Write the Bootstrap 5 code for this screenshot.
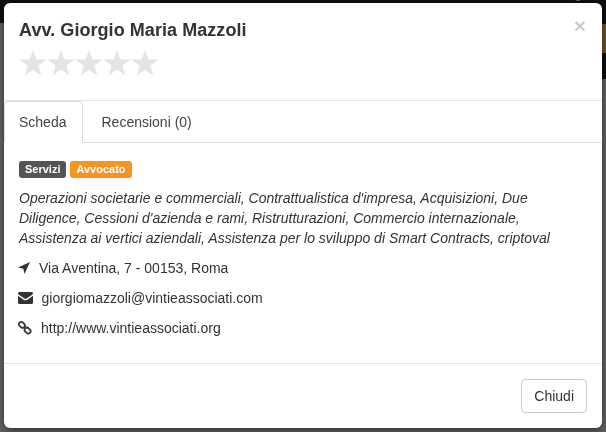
<!DOCTYPE html>
<html lang="it">
<head>
<meta charset="utf-8">
<title>Avv. Giorgio Maria Mazzoli</title>
<link href="https://cdn.jsdelivr.net/npm/bootstrap@5.3.0/dist/css/bootstrap.min.css" rel="stylesheet">
<style>
html,body{height:100%;margin:0;overflow:hidden;background:#636363;font-family:"Liberation Sans",Arial,sans-serif;font-size:14px;line-height:20px;color:#333}
.topstrip{height:23px;background:#0f0f0f;color:#666;overflow:hidden;font-size:14px;gap:31px;line-height:20px;padding-left:467px;white-space:nowrap}
.topstrip span{margin-top:-17px;flex:none}
.sidecol{width:44px}
.bandtop{height:1px;background:#0f0f0f}
.bandgold{height:29px;background:#6b5427}
.banddark{height:26px;background:#0f0f0f}
.pagewrap{position:fixed;inset:0;padding:3px 4px 4px}
.sheet.modal-content{height:425px;border:0;border-radius:6px;background:#fff;box-shadow:0 3px 9px rgba(0,0,0,.5);color:#333;font-size:14px}
.sheet .modal-header{display:block;border:0;padding:15px 15px 0;height:97px;position:relative;border-radius:6px 6px 0 0}
.sheet h4{font-size:18px;line-height:24px;font-weight:700;margin:0;color:#333;letter-spacing:.06px}
.stars{margin-top:7px;height:28px}
.stars svg{width:28px;height:28px;display:block}
.xclose{position:absolute;right:16px;top:12px;border:0;background:none;padding:0;font-size:21px;line-height:21px;font-weight:700;color:#000;opacity:.2;font-family:"Liberation Sans",sans-serif}
.sheet .nav-tabs{border-top:1px solid #e5e5e5;border-bottom:1px solid #ddd;padding:0;height:43px;--bs-nav-tabs-border-width:0}
.sheet .nav-tabs .nav-link{font-size:14px;line-height:20px;padding:10px 15px;margin:0 2px 0 0;border:1px solid transparent;border-radius:4px 4px 0 0;color:#444;height:42px}
.sheet .nav-tabs .nav-link.tabfirst{padding-left:14px;padding-right:16px;margin-right:2px}
.sheet .nav-tabs .nav-link.active{color:#444;background:#fff;border-color:#ddd #ddd #fff}
.sheet .modal-body{padding:18px 15px 0;flex:1 1 auto}
.tagline{gap:4px;height:17px;margin-bottom:10px}
.tagchip.badge{font-size:11px;line-height:13px;font-weight:700;padding:2px 6px;border-radius:3px;color:#fff}
.chipdark{background:#555}
.chiporange{background:#f7931e}
.descr{font-style:italic;margin:0 0 5px;line-height:20px;color:#333}
.inforow{height:30px;line-height:30px;align-items:center;color:#333;margin-left:-1px}
.inforow svg{display:block;flex:none}
.sheet .modal-footer{border-top:1px solid #e5e5e5;padding:15px;height:65px;display:flex;justify-content:flex-end;align-items:flex-start;border-radius:0}
.closebtn.btn{font-size:14px;line-height:20px;padding:6px 12px;border:1px solid #ccc;border-radius:4px;background:#fff;color:#333;margin:0;height:34px}
.gaparrow{margin-right:9px}
.gapmail{margin-right:8.5px}
.gaplink{margin-right:9px}
</style>
</head>
<body>
<div class="d-flex flex-column h-100">
  <div class="topstrip d-flex"><span>Android</span><span>Disegno di</span></div>
  <div class="d-flex justify-content-between flex-grow-1">
    <div class="sidecol"></div>
    <div class="sidecol">
      <div class="bandtop"></div><div class="bandgold"></div><div class="banddark"></div>
    </div>
  </div>
</div>
<div class="pagewrap">
  <div class="modal-content sheet">
    <div class="modal-header">
      <h4>Avv. Giorgio Maria Mazzoli</h4>
      <button type="button" class="xclose">×</button>
      <div class="stars d-flex">
        <svg viewBox="0 0 28 28"><polygon fill="#e4e4e4" points="14,1 17.3,10.5 27.5,10.6 19.3,16.8 22.3,26.5 14,20.7 5.7,26.5 8.7,16.8 .5,10.6 10.7,10.5"/></svg>
        <svg viewBox="0 0 28 28"><polygon fill="#e4e4e4" points="14,1 17.3,10.5 27.5,10.6 19.3,16.8 22.3,26.5 14,20.7 5.7,26.5 8.7,16.8 .5,10.6 10.7,10.5"/></svg>
        <svg viewBox="0 0 28 28"><polygon fill="#e4e4e4" points="14,1 17.3,10.5 27.5,10.6 19.3,16.8 22.3,26.5 14,20.7 5.7,26.5 8.7,16.8 .5,10.6 10.7,10.5"/></svg>
        <svg viewBox="0 0 28 28"><polygon fill="#e4e4e4" points="14,1 17.3,10.5 27.5,10.6 19.3,16.8 22.3,26.5 14,20.7 5.7,26.5 8.7,16.8 .5,10.6 10.7,10.5"/></svg>
        <svg viewBox="0 0 28 28"><polygon fill="#e4e4e4" points="14,1 17.3,10.5 27.5,10.6 19.3,16.8 22.3,26.5 14,20.7 5.7,26.5 8.7,16.8 .5,10.6 10.7,10.5"/></svg>
      </div>
    </div>
    <ul class="nav nav-tabs">
      <li class="nav-item"><a class="nav-link tabfirst active" href="#">Scheda</a></li>
      <li class="nav-item"><a class="nav-link" href="#">Recensioni (0)</a></li>
    </ul>
    <div class="modal-body">
      <div class="tagline d-flex">
        <span class="badge tagchip chipdark">Servizi</span>
        <span class="badge tagchip chiporange">Avvocato</span>
      </div>
      <p class="descr">Operazioni societarie e commerciali, Contrattualistica d'impresa, Acquisizioni, Due Diligence, Cessioni d'azienda e rami, Ristrutturazioni, Commercio internazionale, Assistenza ai vertici aziendali, Assistenza per lo sviluppo di Smart Contracts, criptoval</p>
      <div class="inforow d-flex">
        <svg class="gaparrow" width="12" height="12" viewBox="0 0 12 12"><path fill="#333" d="M12 0 6.500 12 5.300 6.700 0 5.500z"/></svg>
        <span>Via Aventina, 7 - 00153, Roma</span>
      </div>
      <div class="inforow d-flex">
        <svg class="gapmail" width="15" height="12" viewBox="0 0 15 12"><path fill="#333" d="M1.300 0h12.400c.7 0 1.300.6 1.300 1.300 0 .6-.4 1.100-.9 1.500L8.600 6.600c-.7.500-1.500.500-2.200 0L.9 2.800C.4 2.400 0 1.900 0 1.300 0 .6.6 0 1.300 0zM0 3.800l6 4.100c.9.600 2.100.600 3 0l6-4.100v7c0 .7-.6 1.200-1.300 1.200H1.300C.6 12 0 11.500 0 10.800z"/></svg>
        <span>giorgiomazzoli@vintieassociati.com</span>
      </div>
      <div class="inforow d-flex">
        <svg class="gaplink" width="14" height="14" viewBox="0 0 15 15"><g fill="none" stroke="#333" stroke-width="1.900"><rect x=".7" y="1.700" width="7" height="5" rx="2.500" transform="rotate(45 4.200 4.200)"/><rect x="6.800" y="7.800" width="7" height="5" rx="2.500" transform="rotate(45 10.300 10.300)"/></g></svg>
        <span>http://www.vintieassociati.org</span>
      </div>
    </div>
    <div class="modal-footer">
      <button type="button" class="btn closebtn">Chiudi</button>
    </div>
  </div>
</div>
<script src="https://cdn.jsdelivr.net/npm/bootstrap@5.3.0/dist/js/bootstrap.bundle.min.js"></script>
</body>
</html>
